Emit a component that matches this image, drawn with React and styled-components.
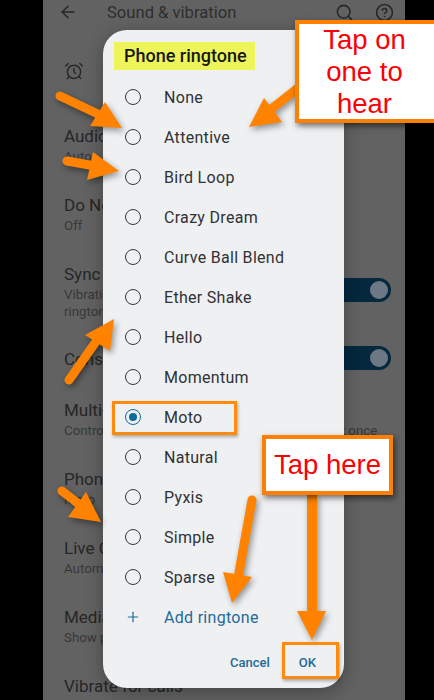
import React from 'react';
import styled, { createGlobalStyle } from 'styled-components';
import { ArrowLeft, Search, CircleHelp, AlarmClock, Plus } from 'lucide-react';

const GlobalStyle = createGlobalStyle`
  html, body {
    margin: 0;
    padding: 0;
    background: #000;
  }
`;

const Page = styled.div`
  position: relative;
  width: 434px;
  height: 700px;
  overflow: hidden;
  background: #000;
  font-family: Roboto, "Noto Sans", sans-serif;
`;

const Phone = styled.div`
  position: relative;
  width: 362px;
  height: 700px;
  margin-left: 43px;
  overflow: hidden;
  background: #626262;
  color: #2a2a2a;
`;

const Header = styled.header`
  display: flex;
  align-items: center;
  height: 24px;
  margin-bottom: 8px;
  padding: 0 11px 0 15px;
  color: #262626;
`;

const HeaderTitle = styled.div`
  flex: 1;
  margin-left: 29px;
  font-size: 16.6px;
  color: #2e2e2e;
`;

const HeaderIcons = styled.div`
  display: flex;
  align-items: center;
  gap: 21px;
`;

const AlarmRow = styled.div`
  display: flex;
  align-items: center;
  height: 78px;
  padding-left: 21px;
`;

const SettingRow = styled.div`
  display: flex;
  align-items: center;
  justify-content: space-between;
  min-height: ${p => (p.$compact ? '50px' : 'auto')};
  padding: ${p => (p.$compact ? '0' : '14px')} 14px ${p => (p.$compact ? '0' : '14px')} 21px;
  box-sizing: border-box;
`;

const SettingTitle = styled.div`
  font-size: 17px;
  line-height: 24px;
  color: #262626;
`;

const SettingSub = styled.div`
  font-size: 13.3px;
  line-height: 17px;
  color: #383838;
  white-space: pre;
`;

const Toggle = styled.div`
  display: flex;
  align-items: center;
  justify-content: flex-end;
  flex: none;
  width: 60px;
  height: 24px;
  margin-top: -2px;
  padding-right: 3px;
  box-sizing: border-box;
  border-radius: 12px;
  background: #04283e;

  &::after {
    content: '';
    width: 18px;
    height: 18px;
    border-radius: 50%;
    background: #6c7985;
  }
`;

const Dialog = styled.div`
  position: absolute;
  top: 30px;
  left: 60px;
  display: flex;
  flex-direction: column;
  width: 241px;
  height: 658px;
  border-radius: 24px;
  background: #eff0f2;
  box-shadow: 0 4px 18px rgba(0, 0, 0, 0.3);
`;

const TitleMark = styled.div`
  align-self: flex-start;
  margin: 12px 0 7px 11px;
  padding: 0 8px 0 10px;
  font-size: 18px;
  font-weight: 500;
  line-height: 28px;
  color: #17181a;
  background: #eef55a;
`;

const OptionList = styled.div`
  display: flex;
  flex-direction: column;
`;

const Option = styled.div`
  display: flex;
  align-items: center;
  gap: 23px;
  height: 40px;
  padding-left: 22px;
  font-size: 16px;
  letter-spacing: 0.3px;
  color: ${p => (p.$accent ? '#1f6a96' : '#303236')};
`;

const Radio = styled.span`
  display: flex;
  align-items: center;
  justify-content: center;
  flex: none;
  width: 16px;
  height: 16px;
  box-sizing: border-box;
  border: 1.75px solid ${p => (p.$on ? '#0f6a9c' : '#34383d')};
  border-radius: 50%;

  &::after {
    content: '';
    display: ${p => (p.$on ? 'block' : 'none')};
    width: 8px;
    height: 8px;
    border-radius: 50%;
    background: #0f6a9c;
  }
`;

const PlusSlot = styled.span`
  display: flex;
  justify-content: center;
  flex: none;
  width: 16px;
`;

const Footer = styled.div`
  display: flex;
  justify-content: flex-end;
  gap: 29px;
  margin-top: 13px;
  padding-right: 28px;
  font-size: 13px;
  font-weight: 500;
  line-height: 26px;
  color: #1f6a96;
`;

const Callout = styled.div`
  position: absolute;
  top: ${p => p.$top}px;
  left: ${p => p.$left}px;
  width: ${p => p.$width}px;
  height: ${p => p.$height}px;
  display: flex;
  align-items: center;
  justify-content: center;
  box-sizing: border-box;
  padding-right: ${p => (p.$open ? '4px' : '0')};
  border: 4px solid #ff8000;
  border-right-width: ${p => (p.$open ? 0 : 4)}px;
  background: #fff;
  color: #fb0004;
  font-family: "Liberation Sans", Arial, sans-serif;
  font-size: 27.5px;
  line-height: 32px;
  text-align: center;
  white-space: pre-line;
  box-shadow: 2px 3px 6px rgba(0, 0, 0, 0.55);
`;

const Outline = styled.div`
  position: absolute;
  top: ${p => p.$top}px;
  left: ${p => p.$left}px;
  width: ${p => p.$width}px;
  height: ${p => p.$height}px;
  box-sizing: border-box;
  border: 3px solid #ff8a0c;
  box-shadow: 1px 2px 3px rgba(0, 0, 0, 0.3);
`;

const ArrowLayer = styled.svg`
  position: absolute;
  inset: 0;
  filter: drop-shadow(2px 3px 3px rgba(0, 0, 0, 0.4));
  pointer-events: none;
`;

const ringtones = [
  'None', 'Attentive', 'Bird Loop', 'Crazy Dream', 'Curve Ball Blend', 'Ether Shake',
  'Hello', 'Momentum', 'Moto', 'Natural', 'Pyxis', 'Simple', 'Sparse'
];

const arrows = [
  { tail: [60, 96, 100, 115], head: '105,102 122,128 90,126' },
  { tail: [67, 161, 95, 166], head: '93,152 119,171 87,180' },
  { tail: [298, 88, 270, 110], head: '264,98 282,122 249,127' },
  { tail: [69, 380, 95, 343], head: '85,335 114,319 110,351' },
  { tail: [62, 491, 80, 505], head: '86,492 101,522 68,517' },
  { tail: [252, 500, 238, 578], head: '223,572 252,577 232,603' },
  { tail: [312, 495, 312, 615], head: '297,611 326,611 312,640', square: true }
];

const App = () => (
  <Page>
    <GlobalStyle />
    <Phone>
      <Header>
        <ArrowLeft size={20} strokeWidth={1.8} />
        <HeaderTitle>Sound &amp; vibration</HeaderTitle>
        <HeaderIcons>
          <Search size={19} strokeWidth={2} />
          <CircleHelp size={19} strokeWidth={2} />
        </HeaderIcons>
      </Header>
      <AlarmRow>
        <AlarmClock size={20} strokeWidth={1.8} />
      </AlarmRow>
      <SettingRow>
        <div>
          <SettingTitle>Audio effects</SettingTitle>
          <SettingSub>Auto</SettingSub>
        </div>
      </SettingRow>
      <SettingRow>
        <div>
          <SettingTitle>Do Not Disturb</SettingTitle>
          <SettingSub>Off</SettingSub>
        </div>
      </SettingRow>
      <SettingRow>
        <div>
          <SettingTitle>Sync vibration</SettingTitle>
          <SettingSub>{'Vibration\nringtone'}</SettingSub>
        </div>
        <Toggle />
      </SettingRow>
      <SettingRow $compact>
        <SettingTitle>Constant</SettingTitle>
        <Toggle />
      </SettingRow>
      <SettingRow>
        <div>
          <SettingTitle>Multi-audio</SettingTitle>
          <SettingSub>Control the volume of each app playing audio at once</SettingSub>
        </div>
      </SettingRow>
      <SettingRow>
        <div>
          <SettingTitle>Phone ringtone</SettingTitle>
          <SettingSub>Moto</SettingSub>
        </div>
      </SettingRow>
      <SettingRow>
        <div>
          <SettingTitle>Live Caption</SettingTitle>
          <SettingSub>Automatic</SettingSub>
        </div>
      </SettingRow>
      <SettingRow>
        <div>
          <SettingTitle>Media</SettingTitle>
          <SettingSub>Show player</SettingSub>
        </div>
      </SettingRow>
      <SettingRow>
        <SettingTitle>Vibrate for calls</SettingTitle>
      </SettingRow>

      <Dialog>
        <TitleMark>Phone ringtone</TitleMark>
        <OptionList>
          {ringtones.map((name) => (
            <Option key={name}>
              <Radio $on={name === 'Moto'} />
              {name}
            </Option>
          ))}
          <Option $accent>
            <PlusSlot>
              <Plus size={18} strokeWidth={1.8} />
            </PlusSlot>
            Add ringtone
          </Option>
        </OptionList>
        <Footer>
          <span>Cancel</span>
          <span>OK</span>
        </Footer>
      </Dialog>
    </Phone>

    {/* annotations drawn on top of the screenshot */}
    <ArrowLayer width="434" height="700" viewBox="0 0 434 700">
      {arrows.map((a) => (
        <g key={a.head} fill="#ff8200" stroke="#ff8200">
          <line
            x1={a.tail[0]}
            y1={a.tail[1]}
            x2={a.tail[2]}
            y2={a.tail[3]}
            strokeWidth={a.square ? 10 : 9}
            strokeLinecap={a.square ? 'butt' : 'round'}
          />
          <polygon points={a.head} strokeWidth="0" />
        </g>
      ))}
    </ArrowLayer>
    <Outline $top={401} $left={112} $width={125} $height={34} />
    <Outline $top={642} $left={282} $width={57} $height={37} />
    <Callout $top={20} $left={295} $width={139} $height={103} $open>{'Tap on\none to\nhear'}</Callout>
    <Callout $top={435} $left={262} $width={131} $height={60}>Tap here</Callout>
  </Page>
);

export default App;
